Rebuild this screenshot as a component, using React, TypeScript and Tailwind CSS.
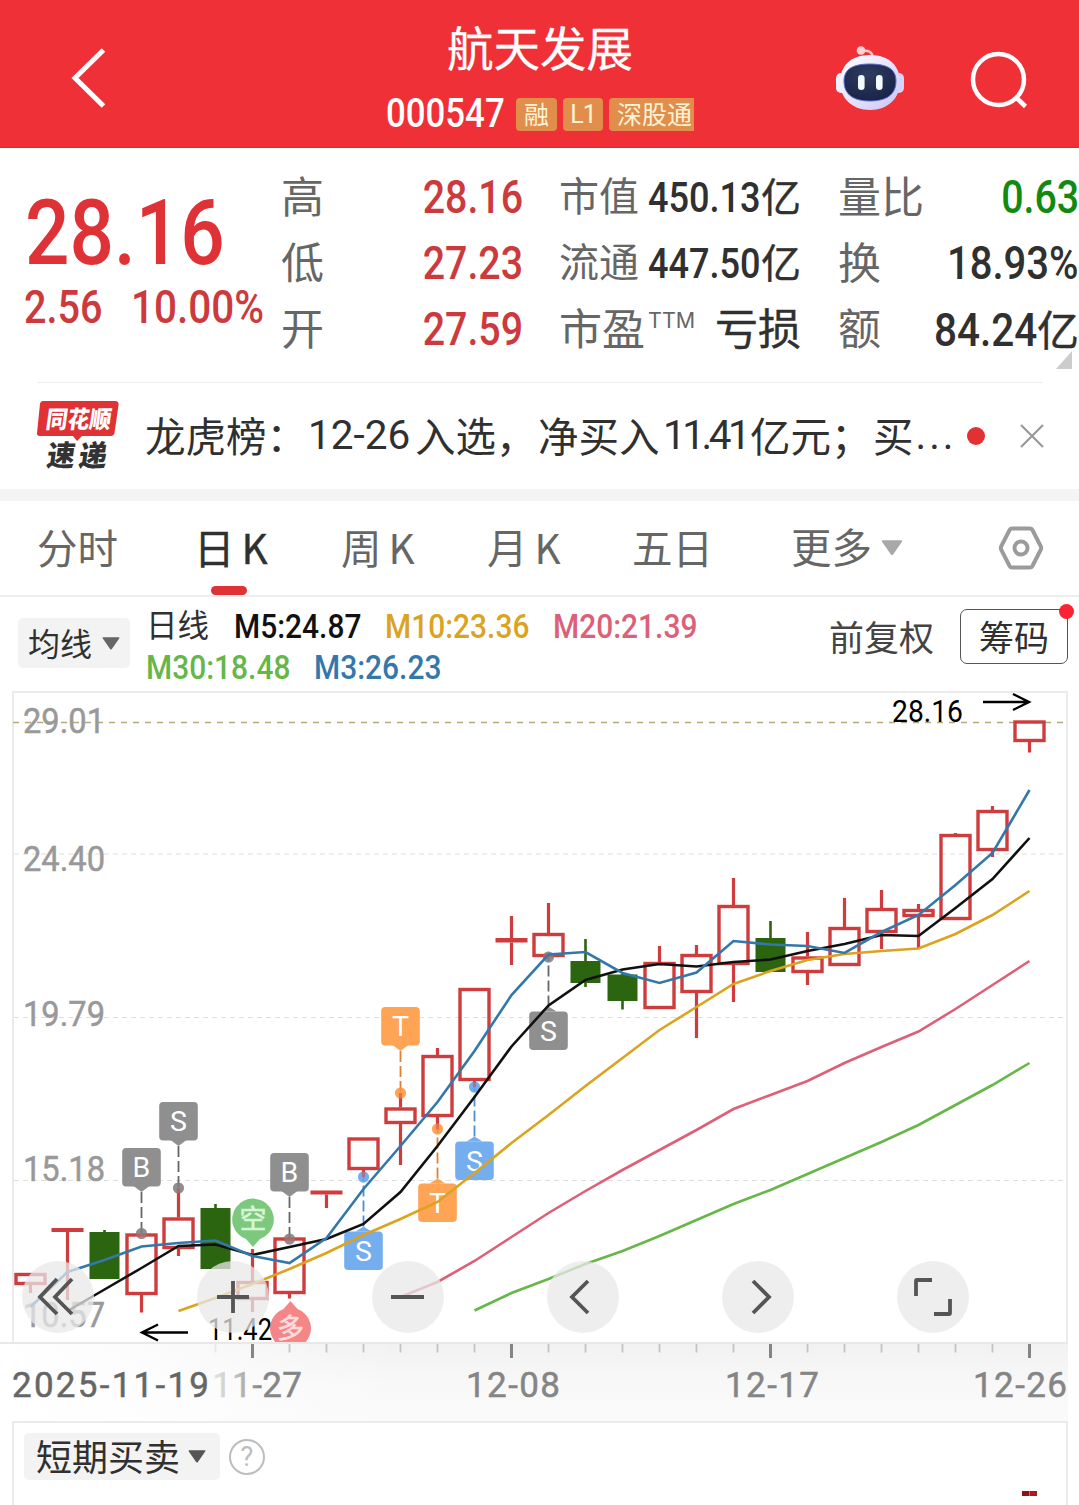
import React from 'react';
import clsx from 'clsx';

type Row = { label: React.ReactNode; value: React.ReactNode };

// x of the n-th trading day
const STEP = 37;
const cx = (i: number) => 30.5 + STEP * i;

// [wick top, body top, body bottom, wick bottom]
type Candle = [number, number, number, number];

const candles: Candle[] = [
  [1273, 1273, 1285, 1293],
  [1230, 1228, 1232, 1300],
  [1230, 1232, 1279, 1279],
  [1234, 1233.5, 1295, 1312.5],
  [1188, 1217.5, 1249, 1256],
  [1204, 1208, 1269, 1269],
  [1249, 1281, 1300, 1312],
  [1238, 1237.5, 1294, 1298.5],
  [1191, 1190.5, 1194.5, 1208],
  [1138, 1137.5, 1170, 1177],
  [1093, 1107.5, 1124, 1165],
  [1048, 1055, 1117, 1130],
  [988, 988, 1081, 1087],
  [916, 938, 942.5, 965],
  [903, 933, 957, 957],
  [939, 961, 983, 987],
  [974, 974.5, 1001, 1009.5],
  [946, 962, 1009, 1009],
  [945, 954, 993, 1038],
  [878, 905, 965, 1002],
  [921, 938, 972, 972],
  [932, 956.5, 973, 985],
  [898, 927, 966, 966],
  [890, 908, 933, 949],
  [904, 909, 917, 948],
  [833, 834, 920, 920],
  [806, 810, 851, 857],
  [721, 720.5, 742, 752.5],
];
const falling = [2, 5, 15, 16, 20];

const averages = [
  {
    name: 'M30',
    color: '#66b648',
    from: 12,
    ys: [1310.5, 1293, 1279, 1264, 1251, 1236, 1220, 1204, 1190, 1174, 1158, 1142, 1125, 1105, 1085, 1063],
  },
  {
    name: 'M20',
    color: '#dc6078',
    from: 10,
    ys: [1297, 1282, 1261, 1237, 1213, 1191, 1170, 1150, 1130, 1109, 1095, 1081, 1063, 1047, 1031.5, 1009, 985, 961],
  },
  {
    name: 'M10',
    color: '#dba31f',
    from: 4,
    ys: [
      1311, 1298, 1284, 1269, 1253, 1235, 1219, 1202, 1173, 1143, 1115, 1086, 1058, 1030, 1007, 984, 971, 960, 954, 951,
      948.5, 934, 915, 891,
    ],
  },
  {
    name: 'M5',
    color: '#111111',
    from: 1,
    ys: [
      1311, 1289.5, 1268, 1246, 1244.5, 1255, 1247, 1239, 1224, 1192, 1146, 1097, 1046.5, 1005.5, 980, 969.5, 964, 966.5,
      962, 959.5, 951, 944, 935, 936, 908, 879, 838,
    ],
  },
  {
    name: 'M3',
    color: '#3478aa',
    from: 0,
    ys: [
      1307, 1272, 1260, 1246.5, 1243, 1240.5, 1256, 1263, 1238, 1189, 1146, 1102, 1051, 995, 954.5, 952, 973, 983, 972.5,
      941, 944.5, 946, 953, 932, 915, 885, 853, 790,
    ],
  },
];

// box: top of the square, dot: y of the anchor on the candle
const markers = [
  { i: 3, text: 'B', box: 1148, dot: 1233.5, color: '#8f8f8f', line: '#666666' },
  { i: 4, text: 'S', box: 1102, dot: 1188, color: '#8f8f8f', line: '#666666' },
  { i: 7, text: 'B', box: 1153, dot: 1239, color: '#8f8f8f', line: '#666666' },
  { i: 9, text: 'S', box: 1231.5, dot: 1177, color: '#74aeee', line: '#4a8fdc' },
  { i: 10, text: 'T', box: 1007, dot: 1093, color: '#ffa354', line: '#e08030' },
  { i: 11, text: 'T', box: 1183.5, dot: 1129, color: '#ffa354', line: '#e08030' },
  { i: 12, text: 'S', box: 1141.5, dot: 1087, color: '#74aeee', line: '#4a8fdc' },
  { i: 14, text: 'S', box: 1011.5, dot: 957, color: '#8f8f8f', line: '#666666' },
];

const yLabels = [
  { text: '29.01', y: 733 },
  { text: '24.40', y: 871 },
  { text: '19.79', y: 1026 },
  { text: '15.18', y: 1181 },
  { text: '10.57', y: 1327 },
];

const dates = [
  { text: '2025-11-19', x: 12, w: 197, color: '#666666' },
  { text: '11-27', x: 212, w: 90, color: 'url(#dateFade)' },
  { text: '12-08', x: 466, w: 94, color: '#858585' },
  { text: '12-17', x: 725, w: 94, color: '#858585' },
  { text: '12-26', x: 973, w: 94, color: '#858585' },
];

const tabs = [
  { name: '分时', width: 'w-[157px]' },
  { name: '日 K', width: 'w-[147px]', active: true },
  { name: '周 K', width: 'w-[146px]' },
  { name: '月 K', width: 'w-[145px]' },
  { name: '五日', width: 'w-[159px]' },
];

// condensed digits
const Num = ({ children, className }: { children: React.ReactNode; className?: string }) => (
  <span className={clsx("inline-block whitespace-nowrap font-['Roboto'] font-medium", className)}>{children}</span>
);

const Caret = ({ className }: { className?: string }) => (
  <svg viewBox="0 0 20 14" className={className} fill="currentColor">
    <path d="M1.5 0h17q1.500 0 .6 1.400L11 13q-1 1.200-2 0L.9 1.400Q0 0 1.500 0z" />
  </svg>
);

const RobotIcon = () => (
  <svg viewBox="0 0 70 66" className="h-[66px] w-[70px]">
    <defs>
      <linearGradient id="shell" x1="0" y1="0" x2="1" y2="1">
        <stop offset="0" stopColor="#ffffff" />
        <stop offset="0.55" stopColor="#e4e2fb" />
        <stop offset="1" stopColor="#c9c2f4" />
      </linearGradient>
      <radialGradient id="visor" cx="0.45" cy="0.3" r="0.8">
        <stop offset="0" stopColor="#2f3d60" />
        <stop offset="1" stopColor="#152044" />
      </radialGradient>
    </defs>
    <path d="M27 6q10-2 11 7" fill="none" stroke="#ffc9cc" strokeWidth="2.500" />
    <circle cx="26" cy="5.500" r="4.300" fill="#ffd2d4" />
    <rect x="1" y="28" width="10" height="20" rx="5" fill="#f3eefe" />
    <rect x="59" y="28" width="10" height="20" rx="5" fill="#d8d2fa" />
    <path d="M35 10c19 0 30 11 30 27S53 65 35 65 5 53 5 37s11-27 30-27z" fill="url(#shell)" />
    <path d="M35 19c17 0 26 5 26 17 0 14-10 20-26 20S9 50 9 36c0-12 9-17 26-17z" fill="url(#visor)" stroke="#5c6fd0" strokeWidth="1" />
    <rect x="23" y="30" width="6.600" height="15" rx="3.300" fill="#f2fbff" />
    <rect x="41" y="30" width="6.600" height="15" rx="3.300" fill="#f2fbff" />
  </svg>
);

const ExpressLogo = () => (
  <svg viewBox="0 0 82 70" className="mb-[2px] h-[70px] w-[82px] overflow-visible">
    <path d="M6 1h72q4 0 3.500 4l-4 28q-.5 3-4 3H45l-5 5-4-5H3q-3.500 0-3-3L3 4q.5-3 3-3z" fill="#e03134" />
    <g transform="skewX(-8)" fontFamily="'Noto Sans CJK SC', sans-serif" fontWeight="900">
      <text x="12" y="28" fontSize="24" textLength="65" lengthAdjust="spacingAndGlyphs" fill="#fff">
        同花顺
      </text>
      <text x="18" y="66" fontSize="29" textLength="28" lengthAdjust="spacingAndGlyphs" fill="#333">
        速
      </text>
      <text x="50" y="66" fontSize="29" textLength="28" lengthAdjust="spacingAndGlyphs" fill="#333">
        递
      </text>
    </g>
  </svg>
);

const Header = () => (
  <header className="flex h-[148px] items-center border-b border-[#b93a3c] bg-[#f03037] text-white">
    <div className="w-[386px] pt-[8px] pl-[71px]">
      <svg viewBox="0 0 36 60" className="h-[60px] w-[36px]" fill="none" stroke="currentColor" strokeWidth="5">
        <path d="M32.500 2L4 30l28.500 28" />
      </svg>
    </div>
    <div className="w-[308px] self-start pt-[13px]">
      <h1 className="text-center text-[46.5px] leading-[66px] [-webkit-text-stroke:0.3px]">航天发展</h1>
      <div className="mt-[5px] flex h-[60px] items-center">
        <Num className="w-[130px] origin-left scale-x-[0.87] text-[40px]">000547</Num>
        <div className="flex gap-[6px] text-[25px] leading-[31px] text-[#fff3d6]">
          <span className="h-[33px] w-[41px] shrink-0 rounded-[4px] bg-[#e18d4b] text-center">融</span>
          <span className="h-[33px] w-[40px] shrink-0 rounded-[4px] bg-[#e18d4b] text-center font-['Roboto'] leading-[34px] tracking-[-1px]">L1</span>
          <span className="h-[33px] w-[85px] shrink-0 rounded-l-[4px] bg-[#e18d4b] pl-[8px] whitespace-nowrap">深股通</span>
        </div>
      </div>
    </div>
    <div className="flex pt-[8px] pl-[141px]">
      <RobotIcon />
      <svg viewBox="0 0 58 58" className="mt-[6px] ml-[65px] h-[58px] w-[58px]" fill="none" stroke="currentColor" strokeWidth="4.500">
        <circle cx="28.500" cy="28.500" r="25.500" />
        <path d="M45 45.500l10.500 10" />
      </svg>
    </div>
  </header>
);

const Column = ({ rows, className }: { rows: Row[]; className: string }) => (
  <div className={className}>
    {rows.map((row, i) => (
      <div key={i} className="flex h-[66px] items-center justify-between whitespace-nowrap text-[#666]">
        <div className="pb-[8px]">{row.label}</div>
        {row.value}
      </div>
    ))}
  </div>
);

const Yi = ({ n, large }: { n: string; large?: boolean }) => (
  <div className="flex items-center text-[#303030]">
    <Num className={clsx('-ml-[20px] origin-right', large ? 'scale-x-[0.88] text-[46px]' : 'scale-x-[0.85] text-[42.5px]')}>{n}</Num>
    <span className={clsx('pb-[6px] [-webkit-text-stroke:0.4px]', large ? 'text-[42px]' : 'text-[40px]')}>亿</span>
  </div>
);

const Quote = () => (
  <section className="relative flex h-[234px] gap-[38px] pt-[17px]">
    <div className="w-[244px] text-[#df3236]">
      <div className="flex h-[136px] items-center pl-[25px]">
        <Num className="origin-left scale-x-[0.87] text-[90px]">28.16</Num>
      </div>
      <div className="-mt-[18px] flex h-[48px] items-center pl-[24px] text-[#cc3a3d]">
        <Num className="w-[103px] origin-left scale-x-[0.86] text-[46px]">2.56</Num>
        <Num className="origin-left translate-x-[1px] scale-x-[0.88] pl-[17px] text-[46px]">10.00%</Num>
      </div>
    </div>
    <Column
      className="-ml-px w-[242px] text-[43px]"
      rows={['高 28.16', '低 27.23', '开 27.59'].map((s) => ({
        label: <span>{s.split(' ')[0]}</span>,
        value: <Num className="origin-right scale-x-[0.865] text-[45.5px] text-[#cc3a3d]">{s.split(' ')[1]}</Num>,
      }))}
    />
    <Column
      className="-ml-[2px] w-[242px] text-[40px]"
      rows={[
        { label: <span>市值</span>, value: <Yi n="450.13" /> },
        { label: <span>流通</span>, value: <Yi n="447.50" /> },
        {
          label: (
            <span className="flex text-[43px]">
              市盈<sup className="top-[16px] ml-[3px] font-['Inter'] text-[21.5px] leading-none">TTM</sup>
            </span>
          ),
          value: <span className="pb-[8px] text-[43px] [-webkit-text-stroke:0.4px] text-[#303030]">亏损</span>,
        },
      ]}
    />
    <Column
      className="-ml-px w-[241px] text-[43px]"
      rows={[
        {
          label: <span>量比</span>,
          value: <Num className="origin-right scale-x-[0.865] text-[45.5px] text-[#128a12]">0.63</Num>,
        },
        {
          label: <span>换</span>,
          value: <Num className="origin-right scale-x-[0.88] text-[45.5px] text-[#303030]">18.93%</Num>,
        },
        { label: <span>额</span>, value: <Yi n="84.24" large /> },
      ]}
    />
    <svg viewBox="0 0 16 18" className="absolute right-[7px] bottom-[13px] h-[18px] w-[16px]">
      <path d="M16 0v18H0z" fill="#ccc" />
    </svg>
  </section>
);

const News = () => (
  <section className="flex h-[107px] items-center pb-[2px] pl-[37px] text-[40.5px] text-[#303030]">
    <ExpressLogo />
    <p className="ml-[26px] flex w-[812px] items-center pb-[1px] whitespace-nowrap">
      <span className="w-[163px]">龙虎榜：</span>
      <span className="w-[107px] font-['Roboto']">12-26</span>
      <span className="w-[123px]">入选，</span>
      <span className="w-[125px]">净买入</span>
      <span className="w-[87px] font-['Roboto'] tracking-[-3.500px]">11.41</span>
      <span className="w-[123px]">亿元；</span>
      <span>买</span>
      <span className="ml-[2px] font-['Roboto'] tracking-[3px]">...</span>
    </p>
    <span className="ml-[10px] h-[18px] w-[18px] rounded-full bg-[#e33033]" />
    <svg viewBox="0 0 24 24" className="ml-[35px] h-[24px] w-[24px]" stroke="#999" strokeWidth="2.200">
      <path d="M1 1l22 22M23 1L1 23" />
    </svg>
  </section>
);

const Tabs = () => (
  <nav className="flex h-[96px] items-center border-b-2 border-[#efeded] pl-[37px] text-[40.5px] text-[#666]">
    {tabs.map((tab) => (
      <div
        key={tab.name}
        className={clsx(
          'relative h-full leading-[92px] whitespace-nowrap [word-spacing:-2px]',
          tab.width,
          tab.active && 'text-[#303030] [-webkit-text-stroke:0.4px]'
        )}
      >
        {tab.name}
        {tab.active && <span className="absolute bottom-0 left-[17px] h-[9px] w-[36px] rounded-full bg-[#df3236]" />}
      </div>
    ))}
    <div className="flex h-full w-[207px] items-center">
      <span className="pb-[3px]">更多</span>
      <Caret className="ml-[9px] h-[18px] w-[22px] text-[#a8a8a8]" />
    </div>
    <svg viewBox="0 0 46 46" className="h-[46px] w-[46px]" fill="none" stroke="#9b9b9b">
      <path d="M14 3.500h18q1.500 0 2.300 1.300l8.400 16.400q.9 1.800 0 3.600l-8.400 16.400q-.8 1.300-2.300 1.300H14q-1.500 0-2.300-1.300L3.300 24.800q-.9-1.800 0-3.600l8.400-16.400Q12.500 3.500 14 3.500z" strokeWidth="4" />
      <circle cx="23" cy="23" r="6.500" strokeWidth="4" />
    </svg>
  </nav>
);

const Indicators = () => (
  <section className="flex h-[93px] pl-[18px] text-[#303030]">
    <div className="mt-[21px] flex h-[50px] w-[112px] items-center rounded-[5px] bg-[#f3f3f3] pl-[10px] text-[32px]">
      <span className="pb-[3px]">均线</span>
      <Caret className="ml-[10px] h-[13px] w-[18px] text-[#666]" />
    </div>
    <div className="ml-[16px] w-[683px] pt-[8px]">
      <div className="flex h-[42px] items-center">
        <span className="w-[88px] pb-[4px] text-[31.5px]">日线</span>
        <Num className="w-[151px] origin-left scale-x-[0.88] text-[34px] text-[#111]">M5:24.87</Num>
        <Num className="w-[168px] origin-left scale-x-[0.88] text-[34px] text-[#dba31f]">M10:23.36</Num>
        <Num className="origin-left scale-x-[0.88] text-[34px] text-[#dc6078]">M20:21.39</Num>
      </div>
      <div className="flex h-[40px] items-center">
        <Num className="w-[168px] origin-left scale-x-[0.88] text-[34px] text-[#66b648]">M30:18.48</Num>
        <Num className="origin-left scale-x-[0.88] text-[34px] text-[#3478aa]">M3:26.23</Num>
      </div>
    </div>
    <div className="mt-[12px] w-[131px] text-[35px] leading-[53px] text-[#444]">前复权</div>
    <div className="relative mt-[12px] h-[55px] w-[108px] rounded-[7px] border border-[#555] text-center text-[35px] leading-[51px]">
      筹码
      <span className="absolute -top-[6px] -right-[7px] h-[15px] w-[15px] rounded-full bg-[#fb2233]" />
    </div>
  </section>
);

const Marker = ({ i, text, box, dot, color, line }: (typeof markers)[number]) => {
  const x = cx(i);
  const above = box < dot;
  const tip = above ? box + 44 : box - 5;
  const base = above ? box + 38 : box;
  return (
    <g>
      <line x1={x} x2={x} y1={tip} y2={dot} stroke={line} strokeWidth="1.800" strokeDasharray="11 4" />
      <rect x={x - 19.3} y={box} width="38.600" height="38.500" rx="4" fill={color} />
      <path d={`M${x - 8} ${base}L${x} ${tip}L${x + 8} ${base}z`} fill={color} />
      <text x={x} y={box + 29} textAnchor="middle" fontSize="28.500" fontFamily="Roboto, sans-serif" fill="#fff">
        {text}
      </text>
    </g>
  );
};

const CandleShape = ({ i, data }: { i: number; data: Candle }) => {
  const [hi, top, bottom, lo] = data;
  const x = cx(i);
  if (falling.includes(i)) {
    return (
      <g fill="#2c6510">
        <rect x={x - 1.3} y={hi} width="2.600" height={lo - hi} />
        <rect x={x - 15} y={top} width="30" height={bottom - top} />
      </g>
    );
  }
  return (
    <g fill="#cf3c3e">
      <rect x={x - 1.6} y={hi} width="3.200" height={Math.max(0, top - hi)} />
      <rect x={x - 1.6} y={bottom} width="3.200" height={Math.max(0, lo - bottom)} />
      {bottom - top < 6 ? (
        <rect x={x - 16} y={top} width="32" height={bottom - top} />
      ) : (
        <rect x={x - 14.5} y={top + 1.5} width="29" height={bottom - top - 3} fill="none" stroke="#cf3c3e" strokeWidth="3.400" />
      )}
    </g>
  );
};

const Chart = () => (
  <svg viewBox="0 690 1079 733" className="block h-[733px] w-[1079px]">
    <defs>
      <linearGradient id="axisBg" x1="0" y1="0" x2="0" y2="1">
        <stop offset="0" stopColor="#f1f1f1" />
        <stop offset="0.5" stopColor="#f8f8f8" />
        <stop offset="1" stopColor="#fafafa" />
      </linearGradient>
      <linearGradient id="axisFade" x1="0" y1="0" x2="1" y2="0">
        <stop offset="0" stopColor="#fff" />
        <stop offset="0.4" stopColor="#fff" stopOpacity="0.7" />
        <stop offset="1" stopColor="#fff" stopOpacity="0" />
      </linearGradient>
      <linearGradient id="dateFade" x1="0" y1="0" x2="1" y2="0">
        <stop offset="0" stopColor="#e6e6e6" />
        <stop offset="0.3" stopColor="#bbb" />
        <stop offset="0.55" stopColor="#858585" />
      </linearGradient>
      <clipPath id="plot">
        <rect x="12" y="690" width="1056" height="653" />
      </clipPath>
    </defs>

    <rect x="13" y="692" width="1054" height="651" fill="none" stroke="#ebebeb" strokeWidth="2" />
    {[854, 1017.5, 1180.5].map((y) => (
      <line key={y} x1="14" x2="1066" y1={y} y2={y} stroke="#dedede" strokeWidth="1.200" strokeDasharray="5 4" />
    ))}
    <line x1="13" x2="1066" y1="722.500" y2="722.500" stroke="#b5aa7c" strokeWidth="1.600" strokeDasharray="6 6" />

    {yLabels.map((l) => (
      <text
        key={l.text}
        x="23"
        y={l.y}
        fontSize="35.500"
        fontFamily="Roboto, sans-serif"
        textLength="82"
        lengthAdjust="spacingAndGlyphs"
        fill="#999"
        stroke="#999"
        strokeWidth="0.500"
      >
        {l.text}
      </text>
    ))}

    {markers.map((m) => (
      <circle key={m.i} cx={cx(m.i)} cy={m.dot} r="5.500" fill={m.color} />
    ))}
    {candles.map((c, i) => (
      <CandleShape key={i} i={i} data={c} />
    ))}
    {markers.map((m) => (
      <Marker key={m.i} {...m} />
    ))}
    {markers.map((m) => (
      <circle key={m.i} cx={cx(m.i)} cy={m.dot} r="5.500" fill={m.color} fillOpacity="0.500" />
    ))}
    {averages.map((a) => (
      <polyline
        key={a.name}
        points={a.ys.map((y, k) => `${cx(a.from + k)},${y}`).join(' ')}
        fill="none"
        stroke={a.color}
        strokeWidth="2.600"
      />
    ))}

    <g fontFamily="'Noto Sans CJK SC', sans-serif" fontSize="27" fill="#fff" textAnchor="middle" clipPath="url(#plot)">
      <path d="M253 1247l-7-8a20.800 20.800 0 1 1 14 0z" fill="#7cc87c" />
      <text x="253" y="1229" fill="#d8f7d8" stroke="#d8f7d8" strokeWidth="0.600">
        空
      </text>
      <path d="M290.500 1301l-7 8a20.500 20.500 0 1 0 14 0z" fill="#f48688" />
      <text x="290.500" y="1338" fill="#ffdcdc" stroke="#ffdcdc" strokeWidth="0.600">
        多
      </text>
    </g>

    <g fill="none" stroke="#000" strokeWidth="2.400">
      <path d="M983 702h46M1013 694l16 8-16 8" />
      <path d="M188 1332.500h-46M158 1324.500l-16 8 16 8" />
    </g>
    <g fontFamily="Roboto, sans-serif" fontSize="30.500" fill="#000">
      <text x="892" y="722" textLength="71" lengthAdjust="spacingAndGlyphs">
        28.16
      </text>
      <text x="208" y="1340" textLength="64" lengthAdjust="spacingAndGlyphs">
        11.42
      </text>
    </g>

    {/* time axis */}
    <rect x="0" y="1344" width="1068" height="77" fill="url(#axisBg)" />
    <rect x="0" y="1344" width="400" height="77" fill="url(#axisFade)" />
    <line x1="0" x2="1068" y1="1343" y2="1343" stroke="#e8e8e8" strokeWidth="2" />
    <line x1="12" x2="1068" y1="1422" y2="1422" stroke="#ebebeb" strokeWidth="2" />
    {candles.map((_, i) => {
      if (i < 5) return null;
      const major = i % 7 === 6;
      return (
        <line
          key={i}
          x1={cx(i)}
          x2={cx(i)}
          y1="1344"
          y2={major ? 1358 : 1352.5}
          stroke={major ? '#858585' : '#c4c4c4'}
          strokeWidth={major ? 3 : 1.8}
          strokeOpacity={i === 5 ? 0.3 : 1}
        />
      );
    })}
    {dates.map((d) => (
      <text
        key={d.text}
        x={d.x}
        y="1397"
        fontSize="35"
        fontFamily="Roboto, sans-serif"
        textLength={d.w}
        lengthAdjust="spacing"
        fill={d.color}
        stroke={d.color}
        strokeWidth="0.500"
      >
        {d.text}
      </text>
    ))}
  </svg>
);

const controls = [
  'M35 18L18 36l17 17M50 18L33 36l17 17',
  'M36 20v32M20 36h32',
  'M19 36h33',
  'M41 20L25 36l16 16',
  'M31 20l16 16-16 16',
  'M19 35V20q0-1 1-1h15M53 38v14q0 1-1 1H37',
];

const Controls = () => (
  <div className="absolute top-[571px] left-[22px] flex gap-[103px]">
    {controls.map((d) => (
      <button key={d} className="h-[72px] w-[72px] rounded-full bg-[#e8e8e8]/75">
        <svg viewBox="0 0 72 72" fill="none" stroke="#555" strokeWidth="3.800">
          <path d={d} />
        </svg>
      </button>
    ))}
  </div>
);

const SubPanel = () => (
  <section className="mr-[11px] ml-[12px] flex h-[82px] border-x-2 border-[#ebebeb] pt-[10px] pl-[10px]">
    <div className="flex h-[47px] w-[196px] items-center rounded-[5px] bg-[#f3f3f3] pl-[12px] text-[36px] whitespace-nowrap text-[#303030]">
      <span className="pb-[3px]">短期买卖</span>
      <Caret className="ml-[8px] h-[13px] w-[18px] text-[#555]" />
    </div>
    <div className="mt-[6px] ml-[9px] h-[36px] w-[36px] rounded-full border-[2.500px] border-[#bdbdbd] text-center font-['Roboto'] text-[27px] leading-[32px] text-[#bdbdbd]">
      ?
    </div>
    <div className="mt-[58px] ml-[757px] flex h-[5px] w-[15px] gap-px bg-[#e0606a]">
      <span className="flex-1 bg-[#8e1118]" />
      <span className="flex-1 bg-[#b0161f]" />
    </div>
  </section>
);

export default function App() {
  return (
    <main className="h-[1505px] w-[1079px] overflow-hidden bg-white font-['Noto_Sans_CJK_SC',sans-serif]">
      <Header />
      <Quote />
      <div className="mr-[36px] ml-[37px] h-px bg-[#eee]" />
      <News />
      <div className="-mt-px h-[12px] bg-[#f4f4f4]" />
      <Tabs />
      <Indicators />
      <div className="relative">
        <Chart />
        <Controls />
      </div>
      <SubPanel />
    </main>
  );
}
